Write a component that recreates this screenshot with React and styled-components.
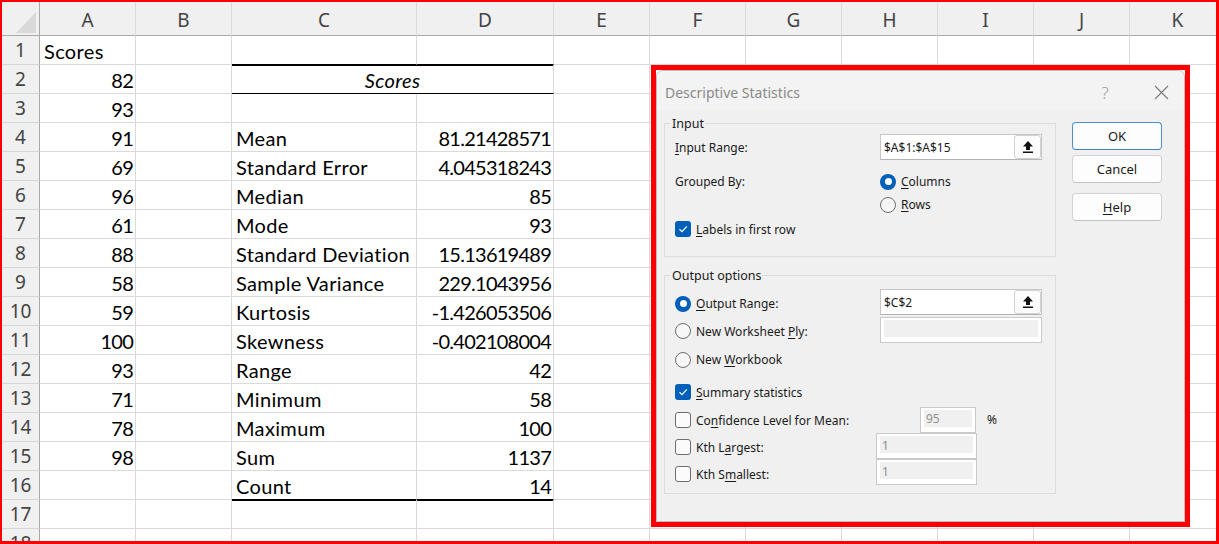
import React from 'react';
import styled, { createGlobalStyle, css } from 'styled-components';

const GlobalStyle = createGlobalStyle`
  html, body { margin: 0; padding: 0; background: #fff; }
  *, *::before, *::after { box-sizing: border-box; }
`;

const Frame = styled.div`
  position: relative;
  width: 1219px;
  height: 544px;
  border-style: solid;
  border-color: #ff0000;
  border-width: 2px 3px 3px 2px;
  overflow: hidden;
  background: #fff;
`;

const Sheet = styled.div`
  display: grid;
  grid-template-columns: 38px 96px 96px 185px 137px repeat(7, 96px);
  grid-template-rows: 34px repeat(18, 29px);
`;

const headFont = css`
  font-family: "Noto Sans", "Open Sans", sans-serif;
  font-size: 19px;
  color: #444;
`;

const Corner = styled.div`
  background: #f0f0f0;
  border-right: 1px solid #a9a9a9;
  border-bottom: 1px solid #a9a9a9;
  display: flex;
  align-items: flex-end;
  justify-content: flex-end;
  padding: 0 3px 2px 0;
`;

const CornerTriangle = styled.div`
  width: 20px;
  height: 21px;
  background: #d9d9d9;
  clip-path: polygon(100% 0, 100% 100%, 0 100%);
`;

const ColHead = styled.div`
  ${headFont}
  background: #f0f0f0;
  border-right: 1px solid #dadada;
  border-bottom: 1px solid #a9a9a9;
  display: flex;
  align-items: center;
  justify-content: center;
  padding-top: 2px;
`;

const RowHead = styled.div`
  ${headFont}
  background: #f0f0f0;
  border-right: 1px solid #a9a9a9;
  border-bottom: 1px solid #d6d6d6;
  display: flex;
  align-items: center;
  justify-content: center;
`;

const Cell = styled.div`
  font-family: Lato, "Liberation Sans", sans-serif;
  font-size: 20px;
  color: #000;
  white-space: nowrap;
  display: flex;
  align-items: center;
  padding: 1px ${(p) => (p.$num ? '2px' : '4px')} 0 4px;
  border-right: 1px solid #dadada;
  border-bottom: 1px solid #dadada;
  letter-spacing: ${(p) => (p.$num ? '-0.75px' : '0.35px')};
  justify-content: ${(p) => (p.$align === 'right' ? 'flex-end' : p.$align === 'center' ? 'center' : 'flex-start')};
  ${(p) => p.$italic && css`font-style: italic;`}
  ${(p) => p.$span && css`grid-column: span ${p.$span};`}
  ${(p) => p.$bottom === 'thin' && css`border-bottom-color: #000;`}
  ${(p) => p.$bottom === 'thick' && css`
    border-bottom-color: #000;
    box-shadow: 0 1px 0 #000;
  `}
`;

const colLetters = ['A', 'B', 'C', 'D', 'E', 'F', 'G', 'H', 'I', 'J', 'K'];
const scores = [82, 93, 91, 69, 96, 61, 88, 58, 59, 100, 93, 71, 78, 98];
const stats = [
  ['Mean', '81.21428571'],
  ['Standard Error', '4.045318243'],
  ['Median', '85'],
  ['Mode', '93'],
  ['Standard Deviation', '15.13619489'],
  ['Sample Variance', '229.1043956'],
  ['Kurtosis', '-1.426053506'],
  ['Skewness', '-0.402108004'],
  ['Range', '42'],
  ['Minimum', '58'],
  ['Maximum', '100'],
  ['Sum', '1137'],
  ['Count', '14'],
];

function SheetRow({ r }) {
  let a;
  if (r === 1) a = <Cell>Scores</Cell>;
  else if (r <= 15) a = <Cell $align="right" $num>{scores[r - 2]}</Cell>;
  else a = <Cell />;

  let cd;
  if (r === 1) {
    cd = (
      <>
        <Cell $bottom="thick" />
        <Cell $bottom="thick" />
      </>
    );
  } else if (r === 2) {
    cd = (
      <Cell $span={2} $align="center" $italic $bottom="thin">
        Scores
      </Cell>
    );
  } else if (r >= 4 && r <= 16) {
    const [label, value] = stats[r - 4];
    const b = r === 16 ? 'thick' : undefined;
    cd = (
      <>
        <Cell $bottom={b}>{label}</Cell>
        <Cell $align="right" $num $bottom={b}>{value}</Cell>
      </>
    );
  } else {
    cd = (
      <>
        <Cell />
        <Cell />
      </>
    );
  }

  return (
    <>
      <RowHead>{r}</RowHead>
      {a}
      <Cell />
      {cd}
      {Array.from({ length: 7 }, (_, i) => (
        <Cell key={i} />
      ))}
    </>
  );
}

/* ---------------- Dialog ---------------- */

const Highlight = styled.div`
  position: absolute;
  left: 649px;
  top: 63px;
  width: 539px;
  height: 462px;
  border: 5px solid #ff0000;
`;

const Dialog = styled.div`
  height: 100%;
  background: #f0f0f0;
  border: 1px solid #bdbdbd;
  border-radius: 7px 7px 0 0;
  display: flex;
  flex-direction: column;
  font-family: "Noto Sans", "Open Sans", sans-serif;
  font-size: 12px;
  color: #1a1a1a;
  overflow: hidden;
`;

const TitleBar = styled.div`
  height: 39px;
  flex: none;
  display: flex;
  align-items: center;
  background: #f3f3f3;
  padding: 3px 0 0 8px;
`;

const Title = styled.div`
  flex: 1;
  font-size: 14px;
  color: #8a8a8a;
`;

const TitleButton = styled.div`
  width: 46px;
  height: 36px;
  display: flex;
  align-items: center;
  justify-content: center;
  margin-right: ${(p) => p.$gap || 0}px;
  color: #9a9a9a;
  font-size: 17px;
  font-weight: 300;
`;

const Body = styled.div`
  flex: 1;
  display: flex;
  gap: 16px;
  padding: 5px 21px 0 7px;
`;

const LeftCol = styled.div`
  width: 392px;
  display: flex;
  flex-direction: column;
  gap: 10px;
`;

const Group = styled.fieldset`
  margin: 0;
  padding: 0;
  border: 1px solid #dcdcdc;
  min-width: 0;
`;

const Legend = styled.legend`
  margin-left: 6px;
  padding: 0 1px;
  line-height: 17px;
  font-size: 12.5px;
`;

const GroupBody = styled.div`
  display: flex;
  flex-direction: column;
  padding: ${(p) => p.$pad};
`;

const Row = styled.div`
  display: flex;
  align-items: center;
  height: ${(p) => p.$h || 28}px;
  margin-top: ${(p) => p.$mt || 0}px;
`;

const LabelCell = styled.div`
  width: ${(p) => p.$w || 205}px;
  flex: none;
  display: flex;
  align-items: center;
  gap: 5px;
  white-space: nowrap;
  align-self: ${(p) => (p.$top ? 'flex-start' : 'center')};
  line-height: ${(p) => (p.$top ? '23px' : 'normal')};
  margin-top: ${(p) => p.$shift || 0}px;
`;

const Key = styled.span`
  text-decoration: underline;
  text-underline-offset: 2px;
  text-decoration-thickness: 1px;
`;

const TextBox = styled.div`
  width: ${(p) => p.$w || 162}px;
  height: 26px;
  flex: none;
  display: flex;
  align-items: center;
  background: #fff;
  border: 1px solid #c6c6c6;
  border-bottom-color: #b4b4b4;
  padding-left: 3px;
`;

const BoxValue = styled.span`
  flex: 1;
`;

const RefButton = styled.div`
  width: 27px;
  height: 24px;
  display: flex;
  align-items: center;
  justify-content: center;
  background: #fcfcfc;
  border: 1px solid #d2d2d2;
  border-radius: 3px;
`;

const DisabledBox = styled.div`
  width: ${(p) => p.$w}px;
  height: 26px;
  flex: none;
  display: flex;
  align-items: center;
  border: 1px solid #c9c9c9;
  background: #f0f0f0;
  box-shadow: inset 3px 2px 0 #fff, inset -3px -5px 0 #fff;
  padding: 0 0 2px 5px;
  color: #8e8e8e;
`;

const Percent = styled.span`
  margin-left: 11px;
`;

const RadioStack = styled.div`
  display: flex;
  flex-direction: column;
`;

const RadioLine = styled.div`
  height: 23px;
  display: flex;
  align-items: center;
  gap: 5px;
`;

const RadioMark = styled.span`
  width: 16px;
  height: 16px;
  flex: none;
  border-radius: 50%;
  display: flex;
  align-items: center;
  justify-content: center;
  ${(p) =>
    p.$on
      ? css`
          background: #005fb8;
          &::after {
            content: '';
            width: 7px;
            height: 7px;
            border-radius: 50%;
            background: #fff;
          }
        `
      : css`
          background: #f7f7f7;
          border: 1px solid #6e6e6e;
        `}
`;

const CheckMark = styled.span`
  width: 16px;
  height: 16px;
  flex: none;
  border-radius: 3px;
  display: flex;
  align-items: center;
  justify-content: center;
  ${(p) =>
    p.$on
      ? css`
          background: #005fb8;
        `
      : css`
          background: #fbfbfb;
          border: 1px solid #6e6e6e;
        `}
`;

const ButtonCol = styled.div`
  display: flex;
  flex-direction: column;
  padding-top: 7px;
`;

const Button = styled.button`
  width: 90px;
  height: 28px;
  margin: 0 0 ${(p) => p.$mb || 0}px 0;
  padding: 0;
  font: inherit;
  font-size: 13px;
  color: #1a1a1a;
  background: #fdfdfd;
  border: 1px solid ${(p) => (p.$primary ? '#4b8fd5' : '#d3d3d3')};
  border-bottom-color: ${(p) => (p.$primary ? '#3f80c6' : '#c2c2c2')};
  border-radius: 4px;
`;

function Radio({ on, children }) {
  return (
    <>
      <RadioMark $on={on} />
      <span>{children}</span>
    </>
  );
}

function Check({ on, children }) {
  return (
    <>
      <CheckMark $on={on}>
        {on && (
          <svg width="12" height="12" viewBox="0 0 12 12">
            <path d="M2.5 6.3 L5 8.7 L9.8 3.4" fill="none" stroke="#fff" strokeWidth="1.2" />
          </svg>
        )}
      </CheckMark>
      <span>{children}</span>
    </>
  );
}

function UpArrow() {
  return (
    <svg width="12" height="14" viewBox="0 0 12 14">
      <path d="M6 1 L1 6.5 H4 V10 H8 V6.5 H11 Z" fill="#111" />
      <rect x="1" y="11.5" width="10" height="1.5" fill="#111" />
    </svg>
  );
}

function CloseIcon() {
  return (
    <svg width="15" height="15" viewBox="0 0 15 15">
      <path d="M1 1 L14 14 M14 1 L1 14" stroke="#7a7a7a" strokeWidth="1.1" />
    </svg>
  );
}

function StatsDialog() {
  return (
    <Highlight>
      <Dialog>
        <TitleBar>
          <Title>Descriptive Statistics</Title>
          <TitleButton $gap={10}>?</TitleButton>
          <TitleButton>
            <CloseIcon />
          </TitleButton>
        </TitleBar>
        <Body>
          <LeftCol>
            <Group>
              <Legend>Input</Legend>
              <GroupBody $pad="2px 13px 15px 10px">
                <Row $h={26}>
                  <LabelCell>
                    <span>
                      <Key>I</Key>nput Range:
                    </span>
                  </LabelCell>
                  <TextBox>
                    <BoxValue>$A$1:$A$15</BoxValue>
                    <RefButton>
                      <UpArrow />
                    </RefButton>
                  </TextBox>
                </Row>
                <Row $h={46} $mt={10}>
                  <LabelCell $top>Grouped By:</LabelCell>
                  <RadioStack>
                    <RadioLine>
                      <Radio on>
                        <Key>C</Key>olumns
                      </Radio>
                    </RadioLine>
                    <RadioLine>
                      <Radio>
                        <Key>R</Key>ows
                      </Radio>
                    </RadioLine>
                  </RadioStack>
                </Row>
                <Row $h={24} $mt={1}>
                  <LabelCell>
                    <Check on>
                      <Key>L</Key>abels in first row
                    </Check>
                  </LabelCell>
                </Row>
              </GroupBody>
            </Group>
            <Group>
              <Legend>Output options</Legend>
              <GroupBody $pad="4px 13px 8px 10px">
                <Row>
                  <LabelCell $shift={3}>
                    <Radio on>
                      <Key>O</Key>utput Range:
                    </Radio>
                  </LabelCell>
                  <TextBox>
                    <BoxValue>$C$2</BoxValue>
                    <RefButton>
                      <UpArrow />
                    </RefButton>
                  </TextBox>
                </Row>
                <Row>
                  <LabelCell $shift={2}>
                    <Radio>
                      New Worksheet <Key>P</Key>ly:
                    </Radio>
                  </LabelCell>
                  <DisabledBox $w={162} />
                </Row>
                <Row>
                  <LabelCell $shift={3}>
                    <Radio>
                      New <Key>W</Key>orkbook
                    </Radio>
                  </LabelCell>
                </Row>
                <Row $mt={6}>
                  <LabelCell>
                    <Check on>
                      <Key>S</Key>ummary statistics
                    </Check>
                  </LabelCell>
                </Row>
                <Row $h={27}>
                  <LabelCell $w={245} $shift={1}>
                    <Check>
                      Co<Key>n</Key>fidence Level for Mean:
                    </Check>
                  </LabelCell>
                  <DisabledBox $w={56}>95</DisabledBox>
                  <Percent>%</Percent>
                </Row>
                <Row $h={26}>
                  <LabelCell $w={201} $shift={2}>
                    <Check>
                      Kth L<Key>a</Key>rgest:
                    </Check>
                  </LabelCell>
                  <DisabledBox $w={101}>1</DisabledBox>
                </Row>
                <Row $h={26}>
                  <LabelCell $w={201} $shift={4}>
                    <Check>
                      Kth S<Key>m</Key>allest:
                    </Check>
                  </LabelCell>
                  <DisabledBox $w={101}>1</DisabledBox>
                </Row>
              </GroupBody>
            </Group>
          </LeftCol>
          <ButtonCol>
            <Button $primary $mb={5}>OK</Button>
            <Button $mb={10}>Cancel</Button>
            <Button>
              <Key>H</Key>elp
            </Button>
          </ButtonCol>
        </Body>
      </Dialog>
    </Highlight>
  );
}

export default function App() {
  return (
    <>
      <GlobalStyle />
      <Frame>
        <Sheet>
          <Corner>
            <CornerTriangle />
          </Corner>
          {colLetters.map((c) => (
            <ColHead key={c}>{c}</ColHead>
          ))}
          {Array.from({ length: 18 }, (_, i) => (
            <SheetRow key={i} r={i + 1} />
          ))}
        </Sheet>
        <StatsDialog />
      </Frame>
    </>
  );
}
